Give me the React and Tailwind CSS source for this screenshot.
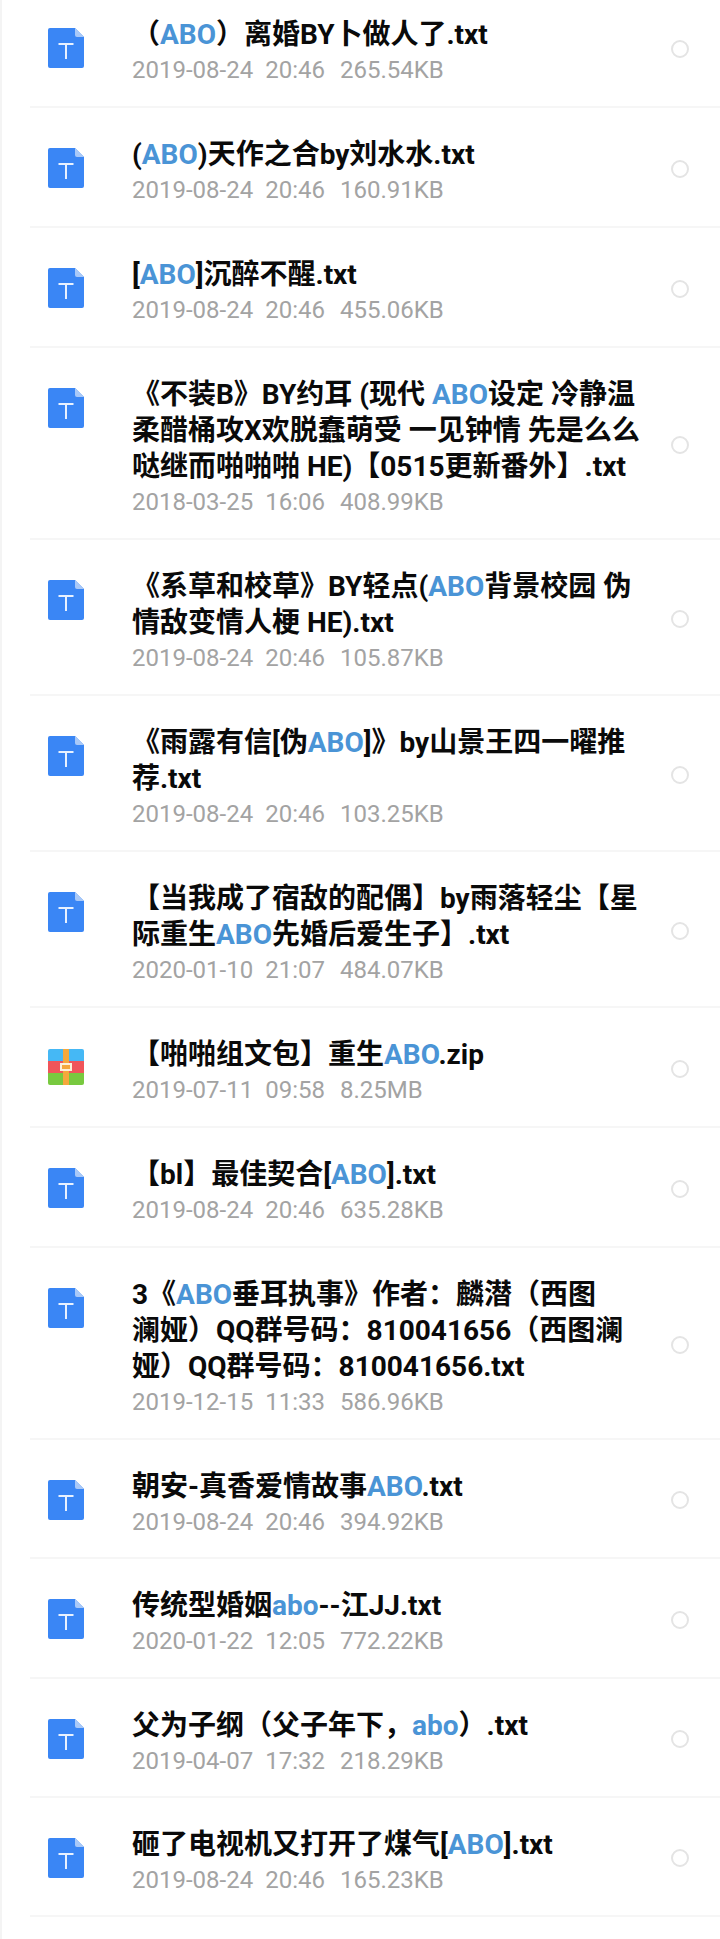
import React from 'react';

const files = [
  { lines: ['（ABO）离婚BY卜做人了.txt'], date: '2019-08-24', time: '20:46', size: '265.54KB' },
  { lines: ['(ABO)天作之合by刘水水.txt'], date: '2019-08-24', time: '20:46', size: '160.91KB' },
  { lines: ['[ABO]沉醉不醒.txt'], date: '2019-08-24', time: '20:46', size: '455.06KB' },
  { lines: ['《不装B》BY约耳 (现代 ABO设定 冷静温', '柔醋桶攻X欢脱蠢萌受 一见钟情 先是么么', '哒继而啪啪啪 HE)【0515更新番外】.txt'], date: '2018-03-25', time: '16:06', size: '408.99KB' },
  { lines: ['《系草和校草》BY轻点(ABO背景校园 伪', '情敌变情人梗 HE).txt'], date: '2019-08-24', time: '20:46', size: '105.87KB' },
  { lines: ['《雨露有信[伪ABO]》by山景王四一曜推', '荐.txt'], date: '2019-08-24', time: '20:46', size: '103.25KB' },
  { lines: ['【当我成了宿敌的配偶】by雨落轻尘【星', '际重生ABO先婚后爱生子】.txt'], date: '2020-01-10', time: '21:07', size: '484.07KB' },
  { lines: ['【啪啪组文包】重生ABO.zip'], date: '2019-07-11', time: '09:58', size: '8.25MB', zip: true },
  { lines: ['【bl】最佳契合[ABO].txt'], date: '2019-08-24', time: '20:46', size: '635.28KB' },
  { lines: ['3《ABO垂耳执事》作者：麟潜（西图', '澜娅）QQ群号码：810041656（西图澜', '娅）QQ群号码：810041656.txt'], date: '2019-12-15', time: '11:33', size: '586.96KB' },
  { lines: ['朝安-真香爱情故事ABO.txt'], date: '2019-08-24', time: '20:46', size: '394.92KB', short: true },
  { lines: ['传统型婚姻abo--江JJ.txt'], date: '2020-01-22', time: '12:05', size: '772.22KB' },
  { lines: ['父为子纲（父子年下，abo）.txt'], date: '2019-04-07', time: '17:32', size: '218.29KB', short: true },
  { lines: ['砸了电视机又打开了煤气[ABO].txt'], date: '2019-08-24', time: '20:46', size: '165.23KB', short: true },
];

const TextIcon = () => (
  <svg width="36" height="40" viewBox="0 0 36 40" className="mt-10">
    <path d="M2 0H27L36 9V38a2 2 0 0 1-2 2H2a2 2 0 0 1-2-2V2a2 2 0 0 1 2-2Z" fill="#3a86f5" />
    <path d="M27 0L36 9H29a2 2 0 0 1-2-2Z" fill="#a9c9f8" />
    <path d="M10.5 15H25.5V17H19V31H17V17H10.5Z" fill="#e8f1ff" />
  </svg>
);

const ZipIcon = () => (
  <svg width="36" height="36" viewBox="0 0 36 36" className="mt-[41px]">
    <path d="M2 0H34a2 2 0 0 1 2 2V12H0V2a2 2 0 0 1 2-2Z" fill="#45b8f5" />
    <rect x="0" y="12" width="36" height="12" fill="#f0555a" />
    <path d="M0 24H36V34a2 2 0 0 1-2 2H2a2 2 0 0 1-2-2Z" fill="#78c93f" />
    <rect x="15" y="0" width="6" height="36" fill="#f5a83c" />
    <rect x="13" y="15" width="10" height="6" fill="#f5a83c" stroke="#fdf0d8" strokeWidth="2" />
  </svg>
);

const Title = ({ text }) => {
  const parts = text.split(/(ABO|abo)/);
  return (
    <div className="h-9 leading-9 whitespace-nowrap">
      {parts.map((part, i) =>
        /^(ABO|abo)$/.test(part) ? (
          <span key={i} className="text-[#4a94d6]">{part}</span>
        ) : (
          <span key={i}>{part}</span>
        )
      )}
    </div>
  );
};

const FileRow = ({ file }) => (
  <div className="flex items-center ml-[28px] pl-[18px] pr-[31px] border-b-2 border-[#f6f6f6]">
    <div className="w-[84px] shrink-0 self-start">
      {file.zip ? <ZipIcon /> : <TextIcon />}
    </div>
    <div className={file.short ? 'flex-1 pt-[29px] pb-[18px]' : 'flex-1 pt-[29px] pb-[19px]'}>
      <div className="text-[28px] font-bold text-[#0a0a0a]">
        {file.lines.map((line) => (
          <Title key={line} text={line} />
        ))}
      </div>
      <div className="flex h-[34px] items-center text-[24px] text-[#a3a3a3] font-['Roboto',sans-serif]">
        <span>{file.date}</span>
        <span className="ml-[12px]">{file.time}</span>
        <span className="ml-[15px]">{file.size}</span>
      </div>
    </div>
    <div className="w-[18px] h-[18px] mt-[3px] rounded-full border-2 border-[#e4e4e4] shrink-0" />
  </div>
);

export default function App() {
  return (
    <div className="w-[720px] h-[1939px] overflow-hidden bg-white border-l-2 border-[#f4f4f4] font-['Roboto','Noto_Sans_CJK_SC',sans-serif]">
      <div className="-mt-3">
        {files.map((file) => (
          <FileRow key={file.lines[0]} file={file} />
        ))}
      </div>
    </div>
  );
}
